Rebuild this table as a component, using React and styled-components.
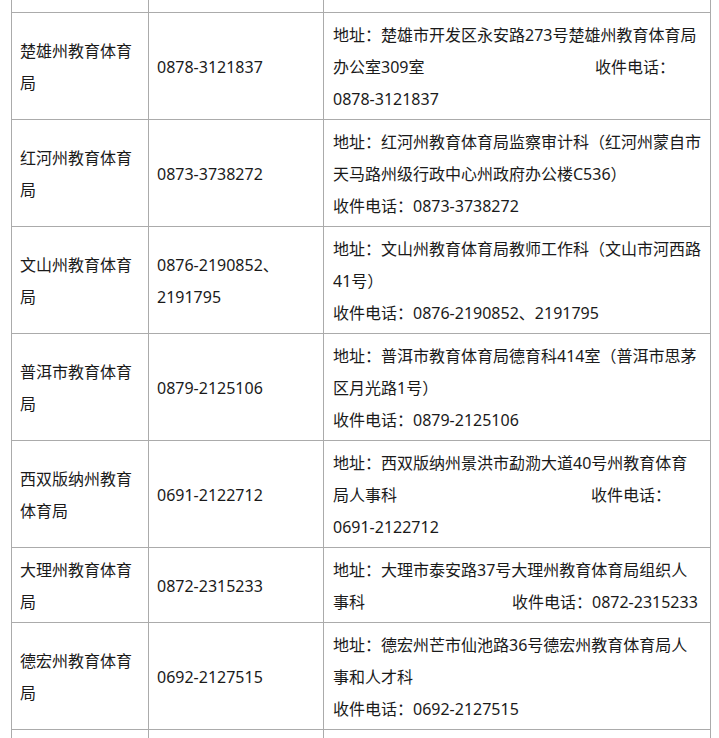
import React from "react";
import styled, { createGlobalStyle } from "styled-components";

const Global = createGlobalStyle`
  html, body { margin: 0; padding: 0; background: #fff; }
  body { font-family: "Noto Sans", "Noto Sans CJK SC", sans-serif; color: #1a1a1a; }
`;

const Page = styled.div`
  padding-left: 11px;
  width: 719px;
  box-sizing: border-box;
  overflow: hidden;
`;

const Table = styled.table`
  border-collapse: collapse;
  table-layout: fixed;
  width: 700px;
  font-size: 16px;
  line-height: 32px;
`;

const Row = styled.tr``;

const Cell = styled.td`
  border: 1px solid #ababab;
  padding: 6px 8px 4px;
  vertical-align: middle;
  word-break: break-all;
  ${(p) => p.$edge === "top" && "border-top: none; height: 12px; padding: 0;"}
  ${(p) => p.$edge === "bottom" && "border-bottom: none; height: 40px; padding: 0;"}
  ${(p) => p.$wide && "padding-left: 9px;"}
`;

const Line = styled.div`
  white-space: nowrap;
`;

const Lead = styled.span`
  display: inline-block;
  width: ${(p) => p.$w}px;
`;

const rows = [
  {
    name: "楚雄州教育体育局",
    phone: ["0878-3121837"],
    addr: [
      "地址：楚雄市开发区永安路273号楚雄州教育体育局",
      { lead: "办公室309室", w: 262, rest: "收件电话：" },
      "0878-3121837",
    ],
  },
  {
    name: "红河州教育体育局",
    phone: ["0873-3738272"],
    addr: [
      "地址：红河州教育体育局监察审计科（红河州蒙自市",
      "天马路州级行政中心州政府办公楼C536）",
      "收件电话：0873-3738272",
    ],
  },
  {
    name: "文山州教育体育局",
    phone: ["0876-2190852、", "2191795"],
    addr: [
      "地址：文山州教育体育局教师工作科（文山市河西路",
      "41号）",
      "收件电话：0876-2190852、2191795",
    ],
  },
  {
    name: "普洱市教育体育局",
    phone: ["0879-2125106"],
    addr: [
      "地址：普洱市教育体育局德育科414室（普洱市思茅",
      "区月光路1号）",
      "收件电话：0879-2125106",
    ],
  },
  {
    name: "西双版纳州教育体育局",
    phone: ["0691-2122712"],
    addr: [
      "地址：西双版纳州景洪市勐泐大道40号州教育体育",
      { lead: "局人事科", w: 258, rest: "收件电话：" },
      "0691-2122712",
    ],
  },
  {
    name: "大理州教育体育局",
    phone: ["0872-2315233"],
    addr: [
      "地址：大理市泰安路37号大理州教育体育局组织人",
      { lead: "事科", w: 179, rest: "收件电话：0872-2315233" },
    ],
  },
  {
    name: "德宏州教育体育局",
    phone: ["0692-2127515"],
    addr: [
      "地址：德宏州芒市仙池路36号德宏州教育体育局人",
      "事和人才科",
      "收件电话：0692-2127515",
    ],
  },
];

function AddrLine({ item }) {
  if (typeof item === "string") return <Line>{item}</Line>;
  return (
    <Line>
      <Lead $w={item.w}>{item.lead}</Lead>
      {item.rest}
    </Line>
  );
}

export default function App() {
  return (
    <Page>
      <Global />
      <Table>
        <colgroup>
          <col style={{ width: 137 }} />
          <col style={{ width: 175 }} />
          <col style={{ width: 387 }} />
        </colgroup>
        <tbody>
          <Row>
            <Cell $edge="top" />
            <Cell $edge="top" />
            <Cell $edge="top" />
          </Row>
          {rows.map((r) => (
            <Row key={r.name}>
              <Cell>{r.name}</Cell>
              <Cell>
                {r.phone.map((p) => (
                  <Line key={p}>{p}</Line>
                ))}
              </Cell>
              <Cell $wide>
                {r.addr.map((a, i) => (
                  <AddrLine key={i} item={a} />
                ))}
              </Cell>
            </Row>
          ))}
          <Row>
            <Cell $edge="bottom" />
            <Cell $edge="bottom" />
            <Cell $edge="bottom" />
          </Row>
        </tbody>
      </Table>
    </Page>
  );
}
